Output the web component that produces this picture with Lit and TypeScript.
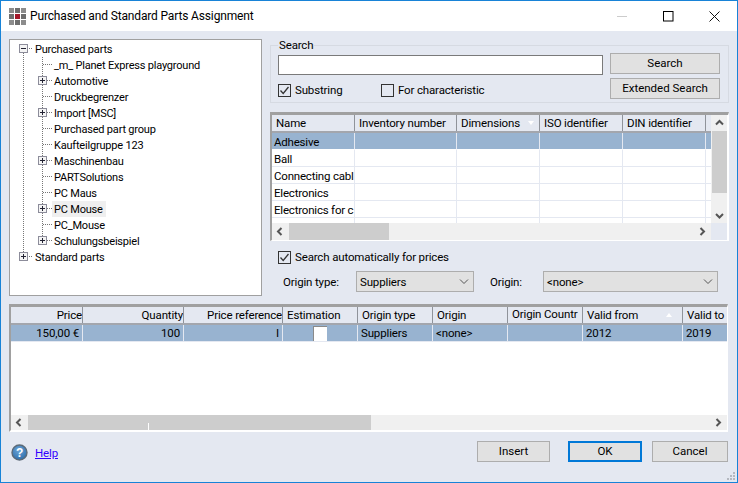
import { LitElement, html, css, svg } from "lit";
import { customElement } from "lit/decorators.js";

const chevron = html`<svg class="chev" width="10" height="6" viewBox="0 0 10 6"><path d="M1 .5 5 4.5 9 .5" fill="none" stroke="#555" stroke-width="1"/></svg>`;
const check = html`<svg width="11" height="11" viewBox="0 0 11 11"><path d="M1.5 5.5 4.2 8.5 9.5 2" fill="none" stroke="#333" stroke-width="1.3"/></svg>`;

function arrow(dir: "l" | "r" | "u" | "d") {
  const p = {
    l: "M6.5 2 3 5.5 6.5 9",
    r: "M3.5 2 7 5.5 3.5 9",
    u: "M2 6.5 5.5 3 9 6.5",
    d: "M2 4 5.5 7.5 9 4",
  }[dir];
  return html`<svg width="11" height="11" viewBox="0 0 11 11"><path d=${p} fill="none" stroke="#555" stroke-width="2"/></svg>`;
}

function expander(x: number, open: boolean) {
  return svg`<rect x=${x + 0.5} y="3.5" width="8" height="8" fill="#f4f4f4" stroke="#8c8c9a"/>
    <path d=${open ? `M${x + 2} 7.5h5` : `M${x + 2} 7.5h5M${x + 4.5} 5v5`} stroke="#223" fill="none"/>`;
}

type Node = { label: string; depth: number; kind: "open" | "plus" | "leaf"; last?: boolean; sel?: boolean };
const nodes: Node[] = [
  { label: "Purchased parts", depth: 0, kind: "open" },
  { label: "_m_ Planet Express playground", depth: 1, kind: "leaf" },
  { label: "Automotive", depth: 1, kind: "plus" },
  { label: "Druckbegrenzer", depth: 1, kind: "leaf" },
  { label: "Import [MSC]", depth: 1, kind: "plus" },
  { label: "Purchased part group", depth: 1, kind: "leaf" },
  { label: "Kaufteilgruppe 123", depth: 1, kind: "leaf" },
  { label: "Maschinenbau", depth: 1, kind: "plus" },
  { label: "PARTSolutions", depth: 1, kind: "leaf" },
  { label: "PC Maus", depth: 1, kind: "leaf" },
  { label: "PC Mouse", depth: 1, kind: "plus", sel: true },
  { label: "PC_Mouse", depth: 1, kind: "leaf" },
  { label: "Schulungsbeispiel", depth: 1, kind: "plus", last: true },
  { label: "Standard parts", depth: 0, kind: "plus", last: true },
];

function treeGutter(n: Node, i: number) {
  const dot = "#777";
  if (n.depth === 0) {
    return html`<svg class="gut" width="23" height="16" viewBox="0 0 23 16">
      ${i === 0 ? svg`<path d="M13.5 12v4" stroke=${dot} stroke-dasharray="1 1"/>` : svg`<path d="M13.5 0v3" stroke=${dot} stroke-dasharray="1 1"/>`}
      <path d="M19 7.5h4" stroke=${dot} stroke-dasharray="1 1"/>
      ${expander(9, n.kind === "open")}
    </svg>`;
  }
  return html`<svg class="gut" width="42" height="16" viewBox="0 0 42 16">
    <path d="M13.5 0v16" stroke=${dot} stroke-dasharray="1 1"/>
    <path d=${n.last ? "M32.5 0v8" : "M32.5 0v16"} stroke=${dot} stroke-dasharray="1 1"/>
    <path d="M33 7.5h9" stroke=${dot} stroke-dasharray="1 1"/>
    ${n.kind === "plus" ? expander(28, false) : ""}
  </svg>`;
}

const topCols = ["Name", "Inventory number", "Dimensions", "ISO identifier", "DIN identifier", ""];
const topRows = ["Adhesive", "Ball", "Connecting cabl", "Electronics", "Electronics for c"];

const priceCols: { t: string; cls?: string }[] = [
  { t: "Price", cls: "r" },
  { t: "Quantity", cls: "r" },
  { t: "Price reference", cls: "r" },
  { t: "Estimation" },
  { t: "Origin type" },
  { t: "Origin" },
  { t: "Origin Countr", cls: "up" },
  { t: "Valid from" },
  { t: "Valid to" },
];

@customElement("app-root")
export class AppRoot extends LitElement {
  static styles = css`
    :host {
      display: block;
      width: 738px;
      height: 483px;
      font-family: "Roboto", "Open Sans", sans-serif;
      font-size: 11.5px;
      letter-spacing: -0.15px;
      line-height: 16px;
      color: #000;
    }
    * { box-sizing: border-box; }
    .win {
      position: relative;
      width: 738px;
      height: 483px;
      border: 1px solid #1883d7;
      background: #e4e8f1;
      display: flex;
      flex-direction: column;
    }
    .titlebar {
      height: 30px;
      background: #fff;
      display: flex;
      align-items: center;
      padding: 0 0 0 8px;
      flex: none;
    }
    .appicon { display: grid; grid-template-columns: repeat(3, 5px); grid-auto-rows: 5px; gap: 1px; margin-right: 4px; }
    .appicon i { background: #8c8c8c; }
    .appicon i.d { background: #6e6e6e; }
    .appicon i.c { background: #a3182a; }
    .title { font-size: 12px; flex: 1; }
    .wbtn { width: 46px; height: 30px; display: flex; align-items: center; justify-content: center; flex: none; }
    .main { padding: 8px 8px 0; display: flex; flex-direction: column; flex: 1; min-height: 0; }
    .top { display: flex; gap: 8px; height: 257px; flex: none; }
    .tree {
      width: 253px;
      flex: none;
      background: #fff;
      border: 1px solid #a0a0a0;
      padding: 1px 0 0;
      font-size: 11px;
      letter-spacing: -0.2px;
    }
    .node { height: 16px; display: flex; align-items: center; }
    .gut { flex: none; display: block; }
    .node span { padding: 1px 2px 0; height: 16px; line-height: 15px; margin-left: 0; white-space: nowrap; }
    .node span.sel { background: #efefef; padding-right: 3px; }
    .right { flex: 1; min-width: 0; display: flex; flex-direction: column; }
    fieldset.group {
      margin: 0;
      padding: 2px 8px 0 7px;
      border: 1px solid #d6dae2;
      height: 64px;
      display: grid;
      grid-template-columns: 325px 110px;
      column-gap: 7px;
      justify-content: start;
      min-width: 0;
    }
    legend { padding: 0 1px; margin-left: 0; line-height: 12px; }
    .sfield { display: flex; flex-direction: column; }
    .input { height: 20px; margin-top: 2px; background: #fff; border: 1px solid #7a7a7a; }
    .checks { display: flex; margin-top: 8px; }
    .ck { display: flex; align-items: center; gap: 4px; height: 14px; }
    .ck.w { width: 103px; }
    .box { width: 13px; height: 13px; border: 1px solid #333; background: transparent; display: flex; align-items: center; justify-content: center; flex: none; }
    .box svg { display: block; }
    .sbtns { display: flex; flex-direction: column; gap: 4px; }
    .btn {
      height: 21px;
      padding-bottom: 2px;
      background: #e1e1e1;
      border: 1px solid #adadad;
      display: flex;
      align-items: center;
      justify-content: center;
      flex: none;
      letter-spacing: 0;
    }
    .gridbox {
      margin-top: 9px;
      height: 129px;
      border-style: solid;
      border-color: #a0a0a0 #fff #fff #a0a0a0;
      border-width: 3px 1px 1px 2px;
      display: grid;
      grid-template-columns: 439px 16px;
      grid-template-rows: 108px 17px;
      background: #fff;
      flex: none;
    }
    .cells { overflow: hidden; background: #fff; }
    .row { display: grid; height: 17px; }
    .top-cols { grid-template-columns: 83px 102px 83px 83px 83px 5px; }
    .price-cols { grid-template-columns: 72px 101px 99px 75px 75px 75px 75px 100px 60px; width: 652px; }
    .hrow { height: 18px; background: #e4e8f1; border-bottom: 2px solid #a3a6ad; }
    .hcell { padding: 0 4px; height: 16px; border-right: 1px solid #8f939a; white-space: nowrap; overflow: hidden; display: flex; align-items: center; justify-content: space-between; margin-top: 0; }
    .hcell:last-child { border-right: 0; }
    .hcell.r { justify-content: flex-end; padding: 0 0 0 2px; }
    .hcell.up { align-items: flex-start; line-height: 14px; }
    .hcell i { flex: none; width: 0; height: 0; margin-right: 1px; }
    .dn { border-left: 3px solid transparent; border-right: 3px solid transparent; border-top: 4px solid #fff; }
    .upi { border-left: 3px solid transparent; border-right: 3px solid transparent; border-bottom: 4px solid #fff; }
    .cell { padding: 1px 0 0 2px; border-right: 1px solid #e4e8f1; border-bottom: 1px solid #e4e8f1; white-space: nowrap; overflow: hidden; display: flex; align-items: center; letter-spacing: -0.2px; }
    .selrow { background: #98b3d0; }
    .selrow .cell { border-right-color: #e4e8f1; border-bottom-color: #fff; }
    .partial { height: 5px; }
    .partial .cell { border-bottom: 0; }
    .pcell { padding: 0 3px; border-right: 1px solid #e4e8f1; white-space: nowrap; overflow: hidden; display: flex; align-items: center; height: 16px; }
    .pcell.r { justify-content: flex-end; }
    .pcell.c { justify-content: center; }
    .pbox { width: 14px; height: 15px; background: #fff; border-top: 1px solid #8a8a8a; border-left: 1px solid #8a8a8a; }
    .price-sel { background: #98b3d0; height: 17px; border-bottom: 1px solid #e4e8f1; }
    .vs { background: #f0f0f0; display: flex; flex-direction: column; align-items: center; }
    .vs .a { height: 16px; display: flex; align-items: center; justify-content: center; flex: none; }
    .vs .th { width: 15px; height: 62px; background: #cdcdcd; flex: none; }
    .vs .sp { flex: 1; }
    .hs { background: #f0f0f0; display: flex; align-items: center; height: 17px; }
    .hs .a { width: 17px; height: 17px; display: flex; align-items: center; justify-content: center; flex: none; }
    .hs .th { height: 17px; background: #cdcdcd; flex: none; }
    .hs .sp { flex: 1; }
    .corner { background: #e4e8f1; }
    .auto { margin: 9px 0 0 8px; }
    .origin { display: flex; align-items: center; margin: 7px 0 0 13px; }
    .lab1 { width: 73px; flex: none; }
    .lab2 { width: 53px; flex: none; margin-left: 16px; }
    .combo { height: 21px; background: #e1e1e1; border: 1px solid #adadad; display: flex; align-items: center; justify-content: space-between; padding: 0 4px 0 3px; flex: none; }
    .combo.a { width: 118px; }
    .combo.b { width: 175px; }
    .pricebox {
      margin-top: 8px;
      width: 719px;
      height: 128px;
      flex: none;
      border-style: solid;
      border-color: #a0a0a0 #fff #fff #a0a0a0;
      border-width: 3px 1px 2px 2px;
      background: #fff;
      display: flex;
      flex-direction: column;
    }
    .pcells { flex: 1; overflow: hidden; min-height: 0; }
    .pcells .row { width: 716px; }
    .pcells .hrow { height: 18px; }
    .hs2 { flex: none; height: 15px; }
    .hs2 .a { height: 15px; }
    .hs2 .th { height: 15px; position: relative; }
    .tick { position: absolute; left: 120px; bottom: 0; width: 1px; height: 7px; background: #fff; }
    .footer { display: flex; align-items: flex-start; flex: 1; padding-top: 9px; }
    .help { display: flex; align-items: center; margin: 3px 0 0 2px; }
    .help a { color: #3300ff; text-decoration: underline; margin-left: 7px; }
    .help svg { display: block; }
    .fb { height: 21px; }
    .spacer { flex: 1; }
    .insert { width: 73px; }
    .ok { width: 74px; border: 2px solid #0078d7; margin-left: 18px; }
    .cancel { width: 76px; margin-left: 10px; margin-right: 1px; }
    .grip { position: absolute; right: 1px; bottom: 1px; display: block; }
  `;

  render() {
    return html`
      <div class="win">
        <div class="titlebar">
          <div class="appicon">
            <i></i><i class="d"></i><i></i>
            <i class="d"></i><i class="c"></i><i class="d"></i>
            <i></i><i class="d"></i><i></i>
          </div>
          <div class="title">Purchased and Standard Parts Assignment</div>
          <div class="wbtn"><svg width="10" height="10" viewBox="0 0 10 10"><path d="M0 5.5h10" stroke="#ccc"/></svg></div>
          <div class="wbtn"><svg width="11" height="11" viewBox="0 0 11 11"><rect x=".5" y=".5" width="9.5" height="9.5" fill="none" stroke="#000"/></svg></div>
          <div class="wbtn"><svg width="11" height="11" viewBox="0 0 11 11"><path d="M.5.5l10 10M10.5.5l-10 10" stroke="#111" fill="none"/></svg></div>
        </div>
        <div class="main">
          <div class="top">
            <div class="tree">
              ${nodes.map(
                (n, i) => html`<div class="node">${treeGutter(n, i)}<span class=${n.sel ? "sel" : ""}>${n.label}</span></div>`
              )}
            </div>
            <div class="right">
              <fieldset class="group">
                <legend>Search</legend>
                <div class="sfield">
                  <div class="input"></div>
                  <div class="checks">
                    <div class="ck w"><div class="box">${check}</div>Substring</div>
                    <div class="ck"><div class="box"></div>For characteristic</div>
                  </div>
                </div>
                <div class="sbtns">
                  <div class="btn">Search</div>
                  <div class="btn">Extended Search</div>
                </div>
              </fieldset>
              <div class="gridbox">
                <div class="cells">
                  <div class="row top-cols hrow">
                    ${topCols.map(
                      (c, i) => html`<div class="hcell">${c}${i === 2 ? html`<i class="dn"></i>` : ""}</div>`
                    )}
                  </div>
                  ${topRows.map(
                    (r, i) => html`<div class="row top-cols ${i === 0 ? "selrow" : ""}">
                      <div class="cell">${r}</div><div class="cell"></div><div class="cell"></div><div class="cell"></div><div class="cell"></div><div class="cell" style="border-right:0"></div>
                    </div>`
                  )}
                  <div class="row top-cols partial">
                    <div class="cell"></div><div class="cell"></div><div class="cell"></div><div class="cell"></div><div class="cell"></div><div></div>
                  </div>
                </div>
                <div class="vs">
                  <div class="a">${arrow("u")}</div>
                  <div class="th"></div>
                  <div class="sp"></div>
                  <div class="a">${arrow("d")}</div>
                </div>
                <div class="hs">
                  <div class="a">${arrow("l")}</div>
                  <div class="th" style="width:100px"></div>
                  <div class="sp"></div>
                  <div class="a">${arrow("r")}</div>
                </div>
                <div class="corner"></div>
              </div>
              <div class="auto ck"><div class="box">${check}</div>Search automatically for prices</div>
              <div class="origin">
                <div class="lab1">Origin type:</div>
                <div class="combo a">Suppliers ${chevron}</div>
                <div class="lab2">Origin:</div>
                <div class="combo b">&lt;none&gt; ${chevron}</div>
              </div>
            </div>
          </div>
          <div class="pricebox">
            <div class="pcells">
              <div class="row price-cols hrow">
                ${priceCols.map(
                  (c, i) => html`<div class="hcell ${c.cls ?? ""}">${c.t}${i === 7 ? html`<i class="upi" style="margin-right:6px"></i>` : ""}</div>`
                )}
              </div>
              <div class="row price-cols price-sel">
                <div class="pcell r">150,00 €</div>
                <div class="pcell r">100</div>
                <div class="pcell r">I</div>
                <div class="pcell c"><div class="pbox"></div></div>
                <div class="pcell">Suppliers</div>
                <div class="pcell">&lt;none&gt;</div>
                <div class="pcell"></div>
                <div class="pcell">2012</div>
                <div class="pcell" style="border-right:0">2019</div>
              </div>
            </div>
            <div class="hs hs2">
              <div class="a">${arrow("l")}</div>
              <div class="th" style="width:343px"><div class="tick"></div></div>
              <div class="sp"></div>
              <div class="a">${arrow("r")}</div>
            </div>
          </div>
          <div class="footer">
            <div class="help">
              <svg width="17" height="17" viewBox="0 0 17 17">
                <defs><radialGradient id="hg" cx=".45" cy=".35" r=".7"><stop offset="0" stop-color="#6ea6d8"/><stop offset="1" stop-color="#2a6aa8"/></radialGradient></defs>
                <circle cx="8.5" cy="8.5" r="7.5" fill="url(#hg)" stroke="#5c6a78" stroke-width="1.4"/>
                <text x="8.5" y="13" text-anchor="middle" font-family="Liberation Sans" font-weight="700" font-size="12" fill="#fff">?</text>
              </svg>
              <a>Help</a>
            </div>
            <div class="spacer"></div>
            <div class="btn fb insert">Insert</div>
            <div class="btn fb ok">OK</div>
            <div class="btn fb cancel">Cancel</div>
          </div>
        </div>
        <svg class="grip" width="10" height="9" viewBox="0 0 10 9" fill="#b4b8c0">
          <rect x="7" y="0" width="2" height="2"/><rect x="4" y="3" width="2" height="2"/><rect x="7" y="3" width="2" height="2"/>
          <rect x="1" y="6" width="2" height="2"/><rect x="4" y="6" width="2" height="2"/><rect x="7" y="6" width="2" height="2"/>
        </svg>
      </div>
    `;
  }
}
